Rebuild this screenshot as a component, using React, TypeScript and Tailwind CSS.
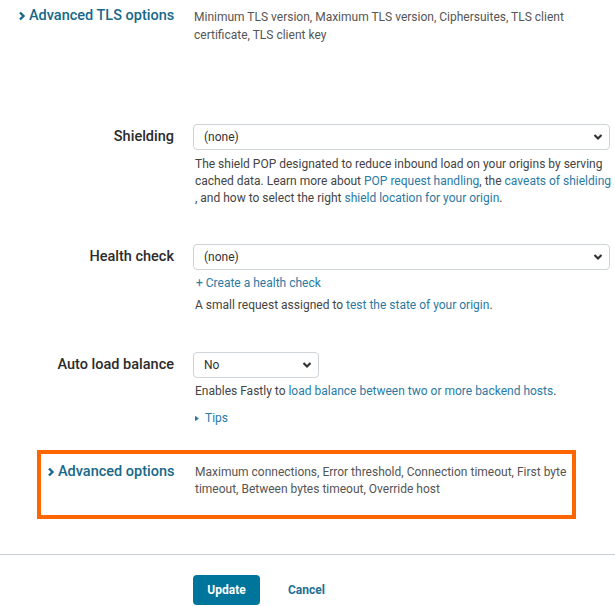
import React from 'react';

const Chevron: React.FC<{ className?: string }> = ({ className }) => (
  <svg viewBox="0 0 10 10" className={className} fill="none" stroke="currentColor" strokeWidth={2.4}>
    <path d="M3 1.5 L6.5 5 L3 8.5" />
  </svg>
);

const SelectBox: React.FC<{ value: string; width: string }> = ({ value, width }) => (
  <div className={`${width} h-[26px] border border-[#cfd4d8] rounded-sm flex items-center justify-between pl-[10px] pr-[6px] text-xs text-[#333]`}>
    <span>{value}</span>
    <svg viewBox="0 0 10 10" className="w-[10px] h-[10px] text-[#333]" fill="none" stroke="currentColor" strokeWidth={2.2}>
      <path d="M1.5 3 L5 6.5 L8.5 3" />
    </svg>
  </div>
);

const Link: React.FC<{ children: React.ReactNode }> = ({ children }) => (
  <span className="text-[#2a7aa3]">{children}</span>
);

const Label: React.FC<{ children: React.ReactNode }> = ({ children }) => (
  <div className="w-[193px] pr-[19px] text-right text-[14.5px] font-medium text-[#2b2b2b] leading-[26px]">{children}</div>
);

export default function App() {
  return (
    <div className="w-[615px] h-[606px] bg-white overflow-hidden" style={{ fontFamily: 'Roboto, "Liberation Sans", sans-serif' }}>
      <div className="pt-2 flex">
        <div className="w-[194px] pl-[17px] flex items-center h-[16px] gap-[2px] text-[#17688a]">
          <Chevron className="w-[10px] h-[10px]" />
          <span className="text-[14.5px] font-medium">Advanced TLS options</span>
        </div>
        <div className="w-[416px] text-xs leading-[18px] text-[#555]">
          Minimum TLS version, Maximum TLS version, Ciphersuites, TLS client certificate, TLS client key
        </div>
      </div>

      <div className="mt-[80px] flex">
        <Label>Shielding</Label>
        <div className="w-[421px]">
          <SelectBox value="(none)" width="w-[417px]" />
          <p className="mt-[6px] pl-[2px] text-xs leading-[17px] text-[#444]">
            The shield POP designated to reduce inbound load on your origins by serving cached data. Learn more about{' '}
            <Link>POP request handling</Link>, the <Link>caveats of shielding</Link> , and how to select the right{' '}
            <Link>shield location for your origin</Link>.
          </p>
        </div>
      </div>

      <div className="mt-[37px] flex">
        <Label>Health check</Label>
        <div className="w-[417px]">
          <SelectBox value="(none)" width="w-[417px]" />
          <p className="mt-1 pl-[3px] text-xs leading-[18px] text-[#2a7aa3]">+ Create a health check</p>
          <p className="mt-1 pl-[2px] text-xs leading-[18px] text-[#444]">
            A small request assigned to <Link>test the state of your origin</Link>.
          </p>
        </div>
      </div>

      <div className="mt-[38px] flex">
        <Label>Auto load balance</Label>
        <div className="w-[417px]">
          <SelectBox value="No" width="w-[126px]" />
          <p className="mt-1 pl-[2px] text-xs leading-[18px] text-[#444]">
            Enables Fastly to <Link>load balance between two or more backend hosts</Link>.
          </p>
          <div className="mt-[9px] flex items-center gap-[6px] pl-[2px] text-xs leading-[18px] text-[#2a7aa3]">
            <svg viewBox="0 0 6 8" className="w-[4px] h-[7px]" fill="currentColor">
              <path d="M0 0 L6 4 L0 8 Z" />
            </svg>
            <span>Tips</span>
          </div>
        </div>
      </div>

      <div className="mt-[23px] ml-[37px] w-[539px] h-[69px] border-4 border-[#ff6600] flex pt-[10px]">
        <div className="w-[153px] pl-[5px] flex items-center h-[16px] gap-[2px] text-[#17688a]">
          <Chevron className="w-[10px] h-[10px]" />
          <span className="text-[14.5px] font-medium">Advanced options</span>
        </div>
        <div className="w-[378px] pl-[1px] text-xs leading-[17px] text-[#555]">
          Maximum connections, Error threshold, Connection timeout, First byte timeout, Between bytes timeout, Override host
        </div>
      </div>

      <div className="mt-[35px] border-t border-[#c9ced3]" />

      <div className="mt-[20px] pl-[193px] flex items-center">
        <button className="w-[67px] h-[30px] bg-[#00759b] rounded-sm text-xs font-bold text-white">Update</button>
        <span className="ml-[28px] text-xs font-bold text-[#1f6f95]">Cancel</span>
      </div>
    </div>
  );
}
